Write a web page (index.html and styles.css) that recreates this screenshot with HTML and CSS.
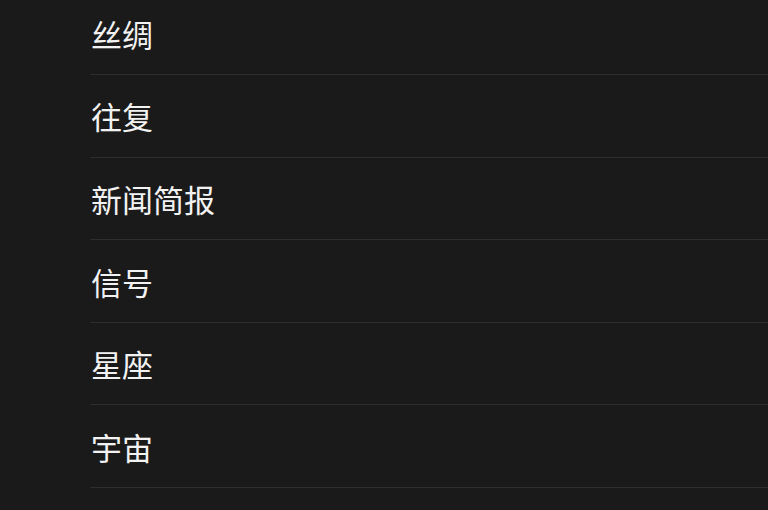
FILE: index.html
```html
<!DOCTYPE html>
<html lang="zh">
<head>
<meta charset="utf-8">
<link rel="stylesheet" href="styles.css">
</head>
<body>
<ul class="list">
  <li class="item">丝绸</li>
  <li class="item">往复</li>
  <li class="item">新闻简报</li>
  <li class="item">信号</li>
  <li class="item">星座</li>
  <li class="item">宇宙</li>
</ul>
</body>
</html>
```
FILE: styles.css
```css
html, body {
  margin: 0;
  padding: 0;
  background: #1a1a1a;
  height: 100%;
  overflow: hidden;
}
.list {
  list-style: none;
  margin: -7.5px 0 0 90px;
  padding: 0;
}
.item {
  height: 82.6px;
  box-sizing: border-box;
  display: flex;
  align-items: center;
  padding-left: 1px;
  border-bottom: 1.5px solid #2e2e2e;
  color: #f2f2f2;
  font-family: "Noto Sans CJK SC", "Noto Sans", sans-serif;
  font-size: 31px;
  line-height: 1;
}
```
